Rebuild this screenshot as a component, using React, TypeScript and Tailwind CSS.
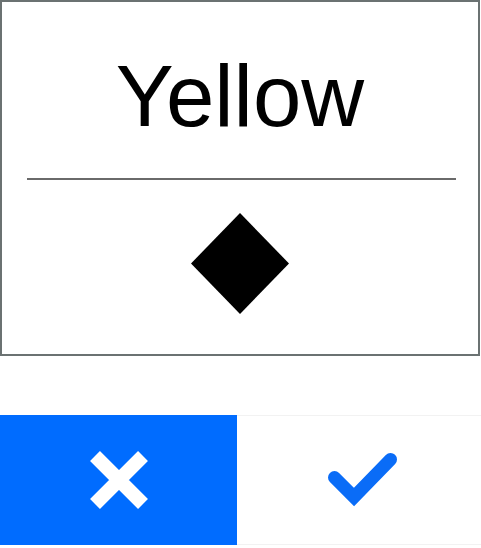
export default function App() {
  return (
    <div className="w-[481px] h-[548px] bg-white overflow-hidden" style={{ fontFamily: '"Liberation Sans", Arial, sans-serif' }}>
      {/* Card */}
      <div className="w-[480px] h-[356px] border-2 border-[#6b7272] flex flex-col">
        <div className="pt-[50px] h-[137px] text-center text-[87px] leading-none text-black">
          Yellow
        </div>
        <div className="mt-[39px] ml-[25px] mr-[22px] h-[2px] bg-[#6a6a6a]" />
        <div className="flex justify-center pt-[33px]">
          <svg width="98" height="101" viewBox="0 0 98 101">
            <polygon points="49,0 98,50.5 49,101 0,50.5" fill="#000" />
          </svg>
        </div>
      </div>

      {/* Buttons */}
      <div className="mt-[59px] h-[130px] flex">
        <button className="w-[237px] h-full bg-[#006cff] flex items-center justify-center">
          <svg width="58" height="58" viewBox="0 0 58 58">
            <path d="M5 5 L53 53 M53 5 L5 53" stroke="#fff" strokeWidth="14" strokeLinecap="butt" />
          </svg>
        </button>
        <button className="flex-1 h-full bg-white border-y border-[#f2f2f2] flex items-center justify-center pl-[8px]">
          <svg width="70" height="54" viewBox="0 0 70 54">
            <polyline
              points="6.5,24.5 26,44 62.5,6.5"
              fill="none"
              stroke="#0a6cf7"
              strokeWidth="13"
              strokeLinecap="round"
              strokeLinejoin="miter"
            />
          </svg>
        </button>
      </div>
    </div>
  );
}
